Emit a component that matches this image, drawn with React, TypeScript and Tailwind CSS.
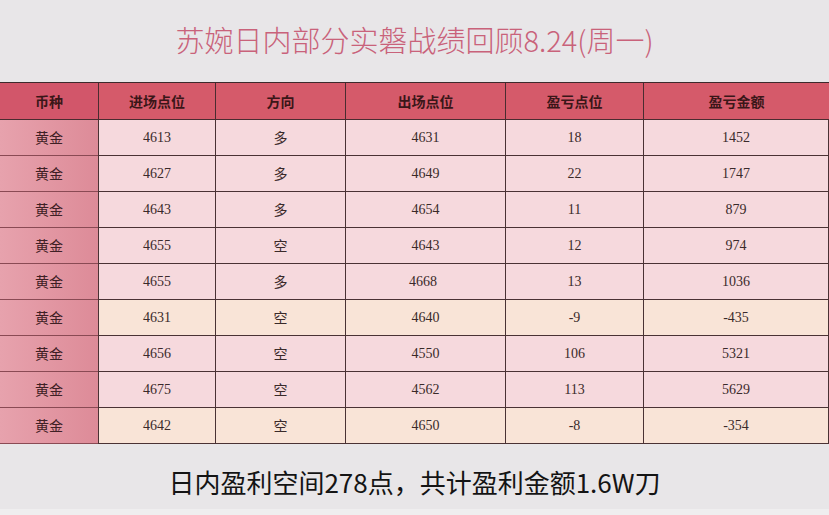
const rows = [
  { entry: "4613", dir: "多", exit: "4631", pts: "18", amt: "1452", tone: "pink" },
  { entry: "4627", dir: "多", exit: "4649", pts: "22", amt: "1747", tone: "pink" },
  { entry: "4643", dir: "多", exit: "4654", pts: "11", amt: "879", tone: "pink" },
  { entry: "4655", dir: "空", exit: "4643", pts: "12", amt: "974", tone: "pink" },
  { entry: "4655", dir: "多", exit: "4668", pts: "13", amt: "1036", tone: "pink", shift: true },
  { entry: "4631", dir: "空", exit: "4640", pts: "-9", amt: "-435", tone: "peach" },
  { entry: "4656", dir: "空", exit: "4550", pts: "106", amt: "5321", tone: "pink" },
  { entry: "4675", dir: "空", exit: "4562", pts: "113", amt: "5629", tone: "pink" },
  { entry: "4642", dir: "空", exit: "4650", pts: "-8", amt: "-354", tone: "peach" },
];

const headers = ["币种", "进场点位", "方向", "出场点位", "盈亏点位", "盈亏金额"];

const cjk = "font-['Noto_Sans_CJK_SC',sans-serif]";
const serif = "font-['Liberation_Serif','Noto_Sans_CJK_SC',serif]";

export default function App() {
  return (
    <div className="w-[829px] h-[515px] bg-[#e8e6e8] flex flex-col overflow-hidden">
      {/* title */}
      <div className="h-[82px] flex items-center justify-center pb-1">
        <h1 className={`${cjk} text-[29px] font-light text-[#c9627a] leading-none`}>
          苏婉日内部分实磐战绩回顾8.24(周一)
        </h1>
      </div>

      {/* table */}
      <div className="border-t border-[#3d2a2c] grid grid-cols-[98px_117px_130px_160px_138px_186px]">
        {headers.map((h, i) => (
          <div
            key={h}
            className={`h-[37px] flex items-center justify-center bg-[#d55a6a] border-b border-[#4a2c30] ${
              i > 0 ? "border-l" : ""
            } ${i === 0 ? "bg-[#d2566a]" : ""} ${cjk} text-[14px] font-bold text-[#3a1618]`}
          >
            {h}
          </div>
        ))}

        {rows.map((r, idx) => {
          const bg = r.tone === "peach" ? "bg-[#f9e4d7]" : "bg-[#f6d9dd]";
          const cell = `h-[36px] flex items-center justify-center border-l border-b border-[#4a3234] ${bg} ${serif} text-[14px] text-[#3a2a2a]`;
          return [
            <div
              key={`c${idx}`}
              className={`h-[36px] flex items-center justify-center border-b border-[#8a4a54] bg-gradient-to-r from-[#e7a2ad] to-[#dd8b98] ${cjk} text-[14px] text-[#3e2024]`}
            >
              黄金
            </div>,
            <div key={`e${idx}`} className={cell}>{r.entry}</div>,
            <div key={`d${idx}`} className={`${cell} ${cjk}`}>{r.dir}</div>,
            <div key={`x${idx}`} className={`${cell} ${r.shift ? "pr-[5px]" : ""}`}>{r.exit}</div>,
            <div key={`p${idx}`} className={cell}>{r.pts}</div>,
            <div key={`a${idx}`} className={`${cell} border-r`}>{r.amt}</div>,
          ];
        })}
      </div>

      {/* summary */}
      <div className="flex-1 flex items-center justify-center pt-[10px]">
        <p className={`${cjk} text-[26px] text-[#141414] leading-none`}>
          日内盈利空间278点，共计盈利金额1.6W刀
        </p>
      </div>
      <div className="h-[6px] bg-[#efeeef]" />
    </div>
  );
}
